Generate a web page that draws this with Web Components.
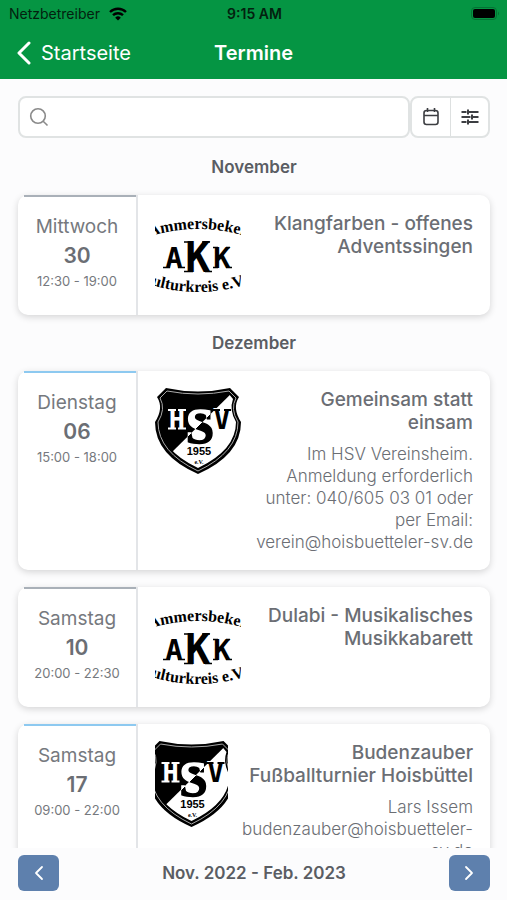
<!DOCTYPE html>
<html lang="de">
<head>
<meta charset="utf-8">
<meta name="viewport" content="width=device-width, initial-scale=1">
<title>Termine</title>
<style>
  body {
    margin: 0;
    font-family: Inter, "Liberation Sans", sans-serif;
    color: #6b6e74;
    background: #fcfcfd;
  }
</style>
</head>
<body>

<termine-app>
  <app-header slot="header" label="Termine" back="Startseite"></app-header>
  <search-bar></search-bar>
  <month-group label="November">
    <event-card day="Mittwoch" date="30" time="12:30 - 19:00" color="#a9b0b8">
      <akk-logo slot="logo"></akk-logo>
      <span slot="title">Klangfarben - offenes Adventssingen</span>
    </event-card>
  </month-group>
  <month-group label="Dezember">
    <event-card day="Dienstag" date="06" time="15:00 - 18:00" color="#8dc9f0">
      <hsv-logo slot="logo"></hsv-logo>
      <span slot="title">Gemeinsam statt einsam</span>
      <span slot="text">Im HSV Vereinsheim. Anmeldung erforderlich unter: 040/605 03 01 oder per Email: verein@hoisbuetteler-sv.de</span>
    </event-card>
    <event-card day="Samstag" date="10" time="20:00 - 22:30" color="#a9b0b8">
      <akk-logo slot="logo"></akk-logo>
      <span slot="title">Dulabi - Musikalisches Musikkabarett</span>
    </event-card>
    <event-card day="Samstag" date="17" time="09:00 - 22:00" color="#8dc9f0">
      <hsv-logo slot="logo"></hsv-logo>
      <span slot="title">Budenzauber Fußballturnier Hoisbüttel</span>
      <span slot="text">Lars Issem budenzauber@hoisbuetteler-sv.de</span>
    </event-card>
  </month-group>
  <range-pager slot="footer">Nov. 2022 - Feb. 2023</range-pager>
</termine-app>

<script>
class TermineApp extends HTMLElement {

  constructor() {
    super()
    this.attachShadow({ mode: 'open' })
    this.shadowRoot.innerHTML = `
      <style>
        :host {
          display: flex;
          flex-direction: column;
          height: 100vh;
        }
        main {
          flex: 1;
          min-height: 0;
          overflow: auto;
          scrollbar-width: none;
          box-sizing: border-box;
          padding: 17px 17px 17px 18px;
          display: flex;
          flex-direction: column;
          gap: 17px;
        }
        ::slotted(*) {
          flex-shrink: 0;
        }
      </style>
      <slot name="header"></slot>
      <main><slot></slot></main>
      <slot name="footer"></slot>
    `
  }

}

class AppHeader extends HTMLElement {

  constructor() {
    super()
    this.attachShadow({ mode: 'open' })
    this.#render()
  }

  #render() {
    this.shadowRoot.innerHTML = `
      <style>
        :host {
          display: block;
          background: #059543;
          color: #fff;
        }
        .status, nav {
          display: grid;
          grid-template-columns: 1fr auto 1fr;
          align-items: center;
        }
        .status {
          height: 27px;
          padding: 0 7px 0 9px;
          color: #03210f;
          font-size: 14px;
        }
        .carrier {
          display: flex;
          align-items: center;
          gap: 9px;
        }
        .clock {
          font-weight: 600;
        }
        .battery {
          justify-self: end;
        }
        nav {
          height: 52px;
          padding: 0 16px;
          font-size: 20px;
        }
        a {
          display: flex;
          align-items: center;
          gap: 9px;
          color: inherit;
          text-decoration: none;
        }
        h1 {
          margin: 0;
          font-size: 20px;
          font-weight: 600;
        }
        svg {
          display: block;
        }
      </style>
      <div class="status">
        <span class="carrier">Netzbetreiber
          <svg width="18" height="14" viewBox="0 0 18 14" fill="none" stroke="#000" stroke-width="2.4">
            <path d="M1 5a11.4 11.4 0 0 1 16 0"/>
            <path d="M4 8.2a7.2 7.2 0 0 1 10 0"/>
            <path d="M9 13.6 6.2 10.7a4 4 0 0 1 5.6 0z" fill="#000" stroke="none"/>
          </svg>
        </span>
        <span class="clock">9:15 AM</span>
        <svg class="battery" width="29" height="13" viewBox="0 0 29 13">
          <rect x=".5" y=".5" width="25" height="12" rx="3.5" fill="none" stroke="#047334"/>
          <rect x="2" y="2" width="22" height="9" rx="2"/>
          <path d="M27 4.5q2 2 0 4z" fill="#047334"/>
        </svg>
      </div>
      <nav>
        <a href="#start">
          <svg width="16" height="24" viewBox="0 0 16 24" fill="none" stroke="#fff" stroke-width="3" stroke-linecap="round" stroke-linejoin="round">
            <path d="M13 2 3 12l10 10"/>
          </svg>
          ${this.getAttribute('back')}
        </a>
        <h1>${this.getAttribute('label')}</h1>
      </nav>
    `
  }

}

class SearchBar extends HTMLElement {

  constructor() {
    super()
    this.attachShadow({ mode: 'open' })
    this.shadowRoot.innerHTML = `
      <style>
        :host {
          display: flex;
          height: 42px;
          margin-bottom: 1px;
        }
        label, .tools {
          display: flex;
          box-sizing: border-box;
          border: 2px solid #e0e3e3;
          border-radius: 8px;
          background: #fff;
        }
        label {
          flex: 1;
          align-items: center;
          gap: 8px;
          padding: 0 9px;
        }
        input {
          flex: 1;
          min-width: 0;
          border: 0;
          outline: 0;
          background: none;
          font: inherit;
        }
        button {
          width: 38px;
          padding: 0;
          border: 0;
          background: none;
          display: grid;
          place-items: center;
        }
        button + button {
          border-left: 1px solid #dde0e0;
        }
      </style>
      <label>
        <svg width="20" height="20" viewBox="0 0 20 20" fill="none" stroke="#8a8a8a" stroke-width="1.6">
          <circle cx="9" cy="9" r="7.3"/>
          <path d="m14.2 14.2 4.3 4.3"/>
        </svg>
        <input type="search" aria-label="Suche">
      </label>
      <div class="tools">
        <button aria-label="Kalender">
          <svg width="18" height="20" viewBox="0 0 18 20" fill="none" stroke="#3c3e42" stroke-width="1.6">
            <rect x="2" y="3.5" width="14" height="14" rx="2.5"/>
            <path d="M2 8.5h14M5.5 1v4M12.5 1v4"/>
          </svg>
        </button>
        <button aria-label="Filter">
          <svg width="18" height="18" viewBox="0 0 18 18" fill="none" stroke="#3c3e42" stroke-width="2">
            <path d="M.5 4h5M8 4h9.500M.5 9h9M12 9h5.500M.5 14h5M8 14h9.500"/>
            <path d="M7 1.500v5M11 6.500v5M7 11.500v5"/>
          </svg>
        </button>
      </div>
    `
  }

}

class MonthGroup extends HTMLElement {

  constructor() {
    super()
    this.attachShadow({ mode: 'open' })
    this.shadowRoot.innerHTML = `
      <style>
        :host {
          display: flex;
          flex-direction: column;
          gap: 17px;
        }
        h2 {
          margin: 0;
          text-align: center;
          font-size: 17px;
          line-height: 22px;
          font-weight: 600;
          color: #5a5d63;
        }
      </style>
      <h2>${this.getAttribute('label')}</h2>
      <slot></slot>
    `
  }

}

class EventCard extends HTMLElement {

  constructor() {
    super()
    this.attachShadow({ mode: 'open' })
    this.#render()
  }

  #render() {
    this.shadowRoot.innerHTML = `
      <style>
        :host {
          display: block;
        }
        a {
          display: flex;
          border-radius: 10px;
          background: #fff;
          box-shadow: 0 2px 7px rgb(0 0 0 / 16%);
          color: inherit;
          text-decoration: none;
        }
        .when {
          flex: none;
          box-sizing: border-box;
          width: 120px;
          padding-top: 18px;
          border-right: 2px solid #e3e5e8;
          border-radius: 10px 0 0 10px;
          position: relative;
          display: flex;
          flex-direction: column;
          align-items: center;
        }
        .when::before {
          content: "";
          position: absolute;
          top: 0;
          left: 6px;
          right: 0;
          height: 2px;
          background: ${this.getAttribute('color')};
        }
        .day {
          font-size: 19px;
          line-height: 27px;
          color: #76797e;
        }
        .date {
          font-size: 21px;
          line-height: 31px;
          font-weight: 600;
        }
        .time {
          font-size: 13px;
          line-height: 20px;
          color: #76797e;
        }
        .what {
          flex: 1;
          min-width: 0;
          padding: 17px;
          display: flex;
          align-items: flex-start;
          gap: 14px;
        }
        slot[name=logo]::slotted(*) {
          flex: 0 1 86px;
          min-width: 0;
        }
        .info {
          flex: 1 0 min-content;
          text-align: right;
          display: flex;
          flex-direction: column;
          gap: 9px;
        }
        slot[name=title]::slotted(*) {
          font-size: 19px;
          line-height: 23px;
          font-weight: 500;
        }
        slot[name=text]::slotted(*) {
          font-size: 17px;
          line-height: 22px;
          font-weight: 300;
        }
      </style>
      <a href="#termin">
        <div class="when">
          <span class="day">${this.getAttribute('day')}</span>
          <span class="date">${this.getAttribute('date')}</span>
          <span class="time">${this.getAttribute('time')}</span>
        </div>
        <div class="what">
          <slot name="logo"></slot>
          <div class="info">
            <slot name="title"></slot>
            <slot name="text"></slot>
          </div>
        </div>
      </a>
    `
  }

}

class AkkLogo extends HTMLElement {

  constructor() {
    super()
    this.attachShadow({ mode: 'open' })
    this.shadowRoot.innerHTML = `
      <style>
        :host {
          display: block;
          height: 86px;
        }
        svg {
          display: block;
          width: 100%;
          height: 100%;
        }
        .arc {
          font: bold 16px "Liberation Serif", serif;
          text-anchor: middle;
        }
        .initials {
          font: bold 29px "DejaVu Sans Mono", monospace;
          text-anchor: middle;
        }
        .initials .big {
          font-size: 42px;
        }
      </style>
      <svg viewBox="0 0 86 86" preserveAspectRatio="xMidYMid slice">
        <path id="top" d="M-10 26Q43 8 96 26" fill="none"/>
        <path id="bottom" d="M-10 71Q43 89 96 71" fill="none"/>
        <text class="arc"><textPath href="#top" startOffset="50%">Ammersbeker</textPath></text>
        <g class="initials">
          <text x="19" y="56">A</text>
          <text class="big" x="43" y="60">K</text>
          <text x="67" y="56">K</text>
        </g>
        <path d="M8 55.500h7M23 55.500h7M29 30h9M29 59.500h9M47 30h8M50 59.500h7M58 35.500h5M58 55.500h5M71 35.500h4M71 55.500h6" stroke="#000" stroke-width="1.5"/>
        <text class="arc"><textPath href="#bottom" startOffset="50%">ulturkreis e.V</textPath></text>
      </svg>
    `
  }

}

class HsvLogo extends HTMLElement {

  constructor() {
    super()
    this.attachShadow({ mode: 'open' })
    this.shadowRoot.innerHTML = `
      <style>
        :host {
          display: block;
          height: 86px;
        }
        svg {
          display: block;
          width: 100%;
          height: 100%;
        }
        text {
          font-family: "Liberation Serif", serif;
          font-weight: bold;
          text-anchor: middle;
        }
        .side {
          font: bold 27px "DejaVu Sans Mono", monospace;
        }
        .year {
          font: bold 11px "Liberation Sans", sans-serif;
        }
      </style>
      <svg viewBox="0 0 86 86" preserveAspectRatio="xMidYMid slice">
        <defs>
          <!-- hard stop on the diagonal, so the S flips colour where it crosses -->
          <linearGradient id="split" gradientUnits="userSpaceOnUse" x1="27" y1="15" x2="67" y2="55">
            <stop offset=".5" stop-color="#fff"/>
            <stop offset=".5" stop-color="#000"/>
          </linearGradient>
          <clipPath id="inner">
            <path d="M13 5Q43 10 73 5L78 11Q74 22 81 34Q81 62 43 80Q5 62 5 34Q12 22 8 11Z"/>
          </clipPath>
        </defs>
        <path d="M11 0Q43 7 75 0L84 9Q77 20 86 34Q86 67 43 86Q0 67 0 34Q9 20 2 9Z"/>
        <path d="M12 3Q43 9 74 3L81 10Q75 21 83 34Q83 64 43 83Q3 64 3 34Q11 21 5 10Z" fill="none" stroke="#aaa"/>
        <path d="M86 -4L15 66L43 90L90 70Z" fill="#fff" clip-path="url(#inner)"/>
        <text class="side" x="22" y="41" fill="#fff">H</text>
        <path d="M13 22h8M23 22h8M13 40.500h8M23 40.500h8" stroke="#fff" stroke-width="2"/>
        <text class="side" x="67" y="41" stroke="#fff" stroke-width="2" paint-order="stroke">V</text>
        <path d="M57 22h8M69 22h7" stroke="#000" stroke-width="2"/>
        <text x="45" y="55" font-size="51" fill="url(#split)" stroke="url(#split)" stroke-width="1.5">S</text>
        <text class="year" x="44" y="67">1955</text>
        <text x="44" y="76" font-size="6">e.V.</text>
      </svg>
    `
  }

}

class RangePager extends HTMLElement {

  constructor() {
    super()
    this.attachShadow({ mode: 'open' })
    this.shadowRoot.innerHTML = `
      <style>
        :host {
          display: flex;
          align-items: center;
          justify-content: space-between;
          padding: 7px 17px 9px 18px;
          font-size: 17px;
          font-weight: 600;
          color: #5a5d63;
        }
        button {
          width: 41px;
          height: 36px;
          padding: 0;
          border: 0;
          border-radius: 6px;
          background: #5e80ad;
          display: grid;
          place-items: center;
        }
        path {
          fill: none;
          stroke: #fff;
          stroke-width: 1.8;
          stroke-linecap: round;
          stroke-linejoin: round;
        }
      </style>
      <button aria-label="Zurück">
        <svg width="16" height="16" viewBox="0 0 16 16"><path d="M11 2 5 8l6 6"/></svg>
      </button>
      <slot></slot>
      <button aria-label="Weiter">
        <svg width="16" height="16" viewBox="0 0 16 16"><path d="m5 2 6 6-6 6"/></svg>
      </button>
    `
  }

}

customElements.define('termine-app', TermineApp)
customElements.define('app-header', AppHeader)
customElements.define('search-bar', SearchBar)
customElements.define('month-group', MonthGroup)
customElements.define('event-card', EventCard)
customElements.define('akk-logo', AkkLogo)
customElements.define('hsv-logo', HsvLogo)
customElements.define('range-pager', RangePager)
</script>
</body>
</html>
